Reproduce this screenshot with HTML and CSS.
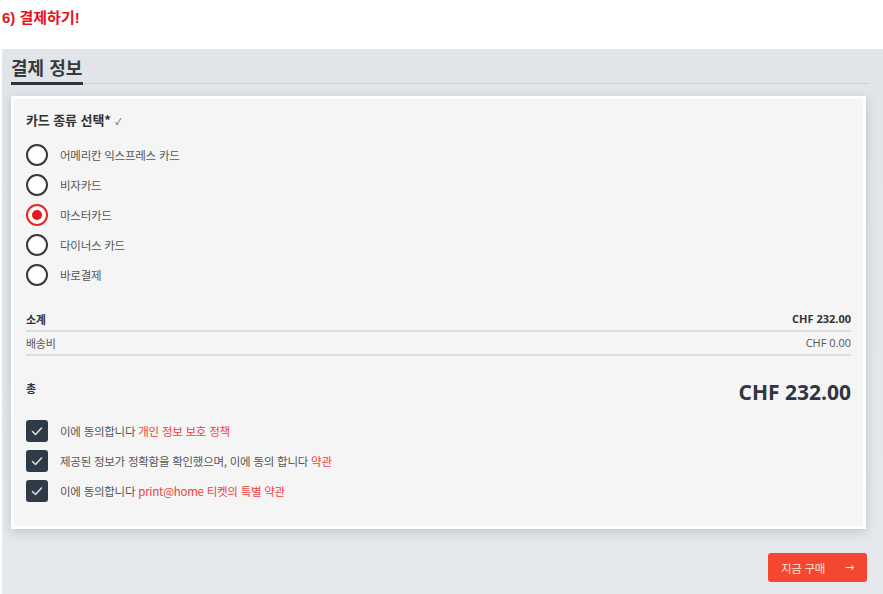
FILE: index.html
```html
<!DOCTYPE html>
<html lang="ko">
<head>
<meta charset="utf-8">
<title>결제하기</title>
<link rel="stylesheet" href="styles.css">
</head>
<body>
<h1 class="page-title">6) 결제하기!</h1>
<div class="panel">
  <div class="heading"><span>결제 정보</span></div>
  <div class="card">
    <div class="field-label">카드 종류 선택* <span class="tick">✓</span></div>
    <ul class="radios">
      <li class="radio"><span class="dot"></span>어메리칸 익스프레스 카드</li>
      <li class="radio"><span class="dot"></span>비자카드</li>
      <li class="radio selected"><span class="dot"></span>마스터카드</li>
      <li class="radio"><span class="dot"></span>다이너스 카드</li>
      <li class="radio"><span class="dot"></span>바로결제</li>
    </ul>
    <div class="summary">
      <div class="sum-row strong"><span>소계</span><span class="amt">CHF 232.00</span></div>
      <div class="sum-row"><span>배송비</span><span class="amt">CHF 0.00</span></div>
    </div>
    <div class="total-row"><span class="total-label">총</span><span class="total-amt">CHF 232.00</span></div>
    <ul class="checks">
      <li class="check"><span class="box"><svg viewBox="0 0 22 22" width="22" height="22"><path d="M6.5 11.5l3 3 6-6.5" fill="none" stroke="#d9dde2" stroke-width="1.6" stroke-linecap="round" stroke-linejoin="round"/></svg></span>이에 동의합니다 <a class="link">개인 정보 보호 정책</a></li>
      <li class="check"><span class="box"><svg viewBox="0 0 22 22" width="22" height="22"><path d="M6.5 11.5l3 3 6-6.5" fill="none" stroke="#d9dde2" stroke-width="1.6" stroke-linecap="round" stroke-linejoin="round"/></svg></span>제공된 정보가 정확함을 확인했으며, 이에 동의 합니다 <a class="link">약관</a></li>
      <li class="check"><span class="box"><svg viewBox="0 0 22 22" width="22" height="22"><path d="M6.5 11.5l3 3 6-6.5" fill="none" stroke="#d9dde2" stroke-width="1.6" stroke-linecap="round" stroke-linejoin="round"/></svg></span>이에 동의합니다 <a class="link">print@home 티켓의 특별 약관</a></li>
    </ul>
  </div>
  <div class="actions">
    <button class="buy">지금 구매 <span class="arrow">→</span></button>
  </div>
</div>
</body>
</html>
```
FILE: styles.css
```css
html, body {
  margin: 0;
  padding: 0;
  background: #fff;
}
body {
  font-family: "Open Sans", "Noto Sans CJK KR", sans-serif;
  color: #333;
}
.page-title {
  margin: 0;
  padding: 8px 0 0 2px;
  height: 49px;
  box-sizing: border-box;
  font-family: "Liberation Sans", "Noto Sans CJK KR", sans-serif;
  font-size: 15px;
  line-height: 20px;
  font-weight: bold;
  color: #e8101c;
}
.panel {
  margin-left: 2px;
  background: linear-gradient(#e1e5e9, #e5e9ed);
  padding: 6px 17px 12px 9px;
  min-height: 545px;
  box-sizing: border-box;
}
.heading {
  display: flex;
  border-bottom: 1px solid #c9cdd2;
  margin-right: -2px;
}
.heading span {
  font-family: "Noto Sans CJK KR", sans-serif;
  font-size: 18px;
  line-height: 24px;
  font-weight: bold;
  letter-spacing: 0;
  color: #343a40;
  padding: 0 1px 3px 0;
  border-bottom: 3px solid #2c333a;
  margin-bottom: -2px;
}
.card {
  margin-top: 12px;
  border: 3px solid #fff;
  background: #f5f5f5;
  padding: 13px 12px 20px 12px;
  box-shadow: 0 3px 10px rgba(0, 0, 0, 0.16);
}
.field-label {
  font-family: "Noto Sans CJK KR", sans-serif;
  font-size: 13px;
  line-height: 16px;
  font-weight: bold;
  letter-spacing: -0.1px;
  color: #333;
}
.tick {
  font-size: 9px;
  font-weight: normal;
  color: #555;
  margin-left: 1px;
}
.radios, .checks {
  list-style: none;
  margin: 0;
  padding: 0;
}
.radios {
  margin-top: 10px;
}
.radio, .check {
  display: flex;
  align-items: center;
  height: 30px;
  font-family: "Noto Sans CJK KR", sans-serif;
  font-size: 11.5px;
  letter-spacing: -0.25px;
  color: #555;
}
.dot {
  width: 22px;
  height: 22px;
  box-sizing: border-box;
  border: 2px solid #383838;
  border-radius: 50%;
  background: #fff;
  margin-right: 12px;
  flex: none;
  display: flex;
  align-items: center;
  justify-content: center;
}
.selected .dot {
  border-color: #e8261f;
}
.selected .dot::after {
  content: "";
  width: 10px;
  height: 10px;
  border-radius: 50%;
  background: #e8161c;
}
.summary {
  margin-top: 18px;
}
.sum-row {
  display: flex;
  justify-content: space-between;
  align-items: center;
  padding: 3px 0 3px;
  border-bottom: 2px solid #dedede;
  font-family: "Noto Sans CJK KR", sans-serif;
  font-size: 11px;
  line-height: 16px;
  letter-spacing: -0.3px;
  color: #555;
}
.sum-row.strong {
  font-weight: bold;
  color: #333;
}
.amt {
  font-family: "Open Sans", sans-serif;
  letter-spacing: 0;
}
.total-row {
  margin-top: 22px;
  display: flex;
  justify-content: space-between;
  align-items: center;
}
.total-label {
  font-family: "Noto Sans CJK KR", sans-serif;
  font-size: 11px;
  font-weight: bold;
  color: #333;
  margin-bottom: 8px;
}
.total-amt {
  font-family: "Open Sans", sans-serif;
  font-size: 21px;
  line-height: 28px;
  font-weight: bold;
  color: #2f3640;
}
.checks {
  margin-top: 10px;
}
.box {
  width: 22px;
  height: 22px;
  border-radius: 3px;
  background: #2f3a47;
  margin-right: 12px;
  flex: none;
  display: flex;
}
.link {
  color: #f0403f;
  margin-left: 3px;
}
.actions {
  display: flex;
  justify-content: flex-end;
  margin-top: 24px;
  margin-right: -1px;
}
.buy {
  width: 99px;
  height: 29px;
  border: none;
  border-radius: 3px;
  background: #f4472f;
  color: #fde3de;
  font-family: "Noto Sans CJK KR", sans-serif;
  font-size: 11.5px;
  letter-spacing: -0.3px;
  display: flex;
  align-items: center;
  justify-content: space-between;
  padding: 0 13px 0 13px;
}
.arrow {
  font-family: "DejaVu Sans", sans-serif;
  font-size: 11px;
}
```
